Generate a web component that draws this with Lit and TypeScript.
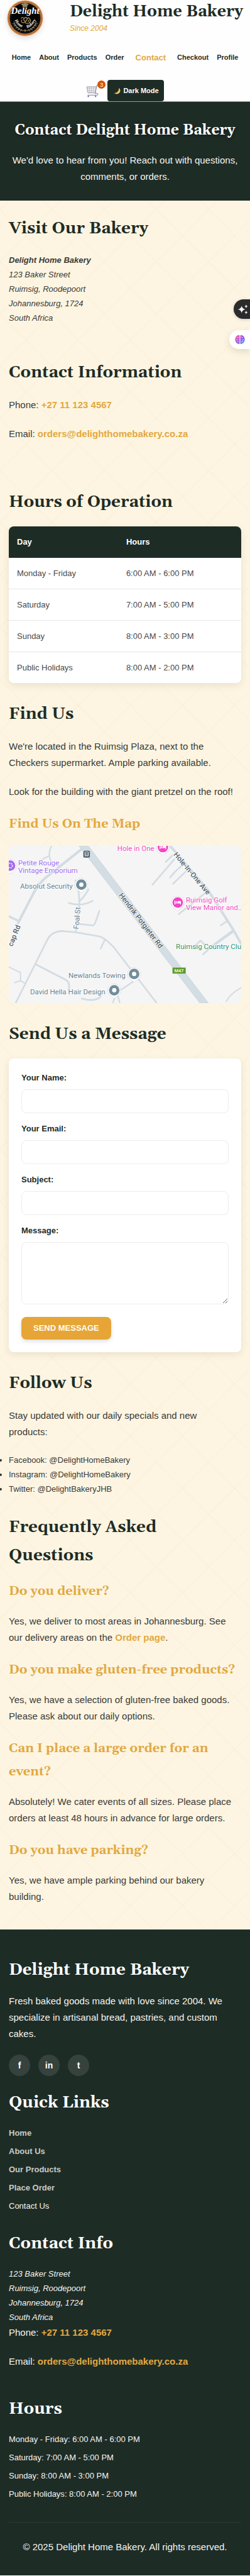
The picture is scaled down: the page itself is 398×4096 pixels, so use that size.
import { LitElement, html, css, svg } from "lit";
import { customElement, property } from "lit/decorators.js";

const HOURS = [
  ["Monday - Friday", "6:00 AM - 6:00 PM"],
  ["Saturday", "7:00 AM - 5:00 PM"],
  ["Sunday", "8:00 AM - 3:00 PM"],
  ["Public Holidays", "8:00 AM - 2:00 PM"],
];

const NAV = ["Home", "About", "Products", "Order", "Contact", "Checkout", "Profile"];
const QUICK = ["Home", "About Us", "Our Products", "Place Order"];

@customElement("bakery-logo")
export class BakeryLogo extends LitElement {
  static styles = css`
    :host { display: block; width: 58px; height: 58px; border-radius: 50%; box-shadow: 0 3px 8px rgba(0, 0, 0, 0.12); }
    svg { display: block; width: 100%; height: 100%; }
    .script { font: italic bold 52px "Liberation Serif", serif; fill: #fff; }
    .arc { font: italic bold 24px "Liberation Serif", serif; fill: #f4f0e8; }
  `;
  render() {
    return html`<svg viewBox="0 0 204 204" role="img" aria-label="Delight Home Bakery logo">
      <defs>
        <path id="arc-l" d="M44 112 Q58 150 98 158" />
        <path id="arc-r" d="M112 158 Q146 146 164 108" />
      </defs>
      <circle cx="102" cy="102" r="102" fill="#f3cfa4" />
      <circle cx="102" cy="102" r="98" fill="#b5713d" />
      <circle cx="102" cy="102" r="87" fill="#c98a55" />
      <circle cx="102" cy="102" r="86" fill="#050505" />
      <circle cx="102" cy="102" r="80" fill="none" stroke="#3a2c20" stroke-width="2" />
      <path d="M88 40 v-9 q-9 -2 -6 -9 q5 -6 10 -2 q3 -7 10 -6 q7 -1 10 6 q7 -3 9 3 q1 6 -7 8 v9 z" fill="#8f8667" />
      <text class="script" x="102" y="76" text-anchor="middle">Delight</text>
      <g fill="none" stroke="#b79b62" stroke-width="4" stroke-linecap="round">
        <path d="M80 102 q10 -10 16 2 q10 -14 18 0 q10 -10 14 4 q8 4 2 12" />
        <path d="M84 112 q-8 8 2 14 q8 4 16 -4 q2 12 14 8 q10 2 14 -10" />
        <path d="M92 108 l10 12 M114 106 l-8 14 M124 112 l-6 8" />
      </g>
      <text class="arc"><textPath href="#arc-l">Home</textPath></text>
      <text class="arc"><textPath href="#arc-r">Bakery</textPath></text>
      <g fill="none" stroke="#9c9379" stroke-width="4" stroke-linecap="round">
        <path d="M40 122 Q54 162 92 172" stroke-dasharray="5 5" />
        <path d="M34 132 l12 4 M40 144 l12 0 M50 156 l12 -3 M62 166 l10 -6 M76 172 l8 -7" />
        <path d="M164 122 Q150 162 112 172" stroke-dasharray="5 5" />
        <path d="M170 132 l-12 4 M164 144 l-12 0 M154 156 l-12 -3 M142 166 l-10 -6 M128 172 l-8 -7" />
      </g>
      <path d="M94 166 h16 l-8 14 z" fill="#a9763f" />
    </svg>`;
  }
}

@customElement("area-map")
export class AreaMap extends LitElement {
  static styles = css`
    :host { display: block; height: 250px; border-radius: 8px; overflow: hidden; background: #f5f5f5; }
    svg { display: block; width: 100%; height: 100%; }
    text { font-family: Roboto, "Liberation Sans", sans-serif; font-size: 40px; paint-order: stroke; stroke: #fff; stroke-width: 5px; stroke-linejoin: round; }
    .poi { fill: #6b808c; }
    .shop { fill: #a56bf0; }
    .stay { fill: #ef4fc4; }
    .park { fill: #2f9468; }
    .street { fill: #4e5d69; font-weight: 500; }
    .shield { fill: #f4f6c8; font-size: 26px; font-weight: 700; stroke: none; }
  `;
  private pin(x: number, y: number, color: string, kind: string) {
    return svg`<g transform="translate(${x} ${y})">
      <path d="M0 46 Q-8 38 -22 29 A36 36 0 1 1 22 29 Q8 38 0 46 Z" fill="#fff" stroke="#c9c9c9" stroke-width="2" />
      <circle r="29" fill=${color} />
      ${kind === "dot" ? svg`<circle r="12" fill="#fff" />` : ""}
      ${kind === "bed" ? svg`<path d="M-18 -11 h4 v12 h13 v-9 h14 q5 0 5 5 v14 h-4 v-6 h-28 v6 h-4 z" fill="#fff" /><circle cx="-8" cy="-4" r="4" fill="#fff" />` : ""}
      ${kind === "palette" ? svg`<circle r="13" fill="none" stroke="#fff" stroke-width="6" stroke-dasharray="6 5" />` : ""}
    </g>`;
  }
  render() {
    return html`<svg viewBox="46 45 1289 868" preserveAspectRatio="xMidYMid slice" role="img" aria-label="Map of Ruimsig">
      <rect x="40" y="40" width="1300" height="880" fill="#f5f5f5" />
      <g fill="none" stroke="#d3dce2" stroke-linecap="round" stroke-linejoin="round">
        <path stroke-width="14" d="M452 62 L250 222 Q205 262 175 325 L100 470" />
        <path stroke-width="12" d="M40 430 L100 458" />
        <path stroke-width="8" d="M284 45 Q262 90 280 126 M266 102 L236 118" />
        <path stroke-width="9" d="M416 235 Q440 290 438 375 L418 522 M488 285 Q475 315 438 352 M380 360 Q450 382 512 348" />
        <path stroke-width="9" d="M436 476 L512 484 Q522 482 526 470 L549 404" />
        <path stroke-width="9" d="M86 913 L262 562 Q282 520 340 515 L418 522 L550 545 Q580 554 628 604 L866 913" />
        <path stroke-width="9" d="M578 566 L556 612" />
        <path stroke-width="10" d="M195 698 L366 786 Q388 800 380 840" />
        <path stroke-width="7" d="M46 712 L113 745 V790 L80 800 M113 790 L135 802" />
        <path stroke-width="8" d="M735 795 L650 852 M650 870 L662 913 M636 880 L622 913" />
        <path stroke-width="10" d="M452 888 Q530 908 556 876" />
        <path stroke-width="14" d="M940 45 L1150 290 L1290 510 L1335 590" />
        <path stroke-width="9" d="M952 98 L916 134 M962 120 L842 260 M1004 155 Q960 190 940 220 M1025 188 L956 254" />
        <path stroke-width="9" d="M1140 300 L988 422 M1254 460 L1220 484 M1288 510 L1180 590 L1122 644 M1288 520 L1190 590 M1060 612 L1108 568 L1130 590" />
        <path stroke-width="7" d="M1335 826 Q1270 862 1250 904" />
      </g>
      <path d="M436 45 H488 L1152 913 H1104 Z" fill="#d3dde4" stroke="#c4ced6" stroke-width="2" />
      <rect x="459" y="70" width="39" height="41" rx="10" fill="#4c5d6b" stroke="#fff" stroke-width="2" />
      <path d="M469 79 h19 v20 h-19 z M469 90 h19 M472 99 v5 M485 99 v5" fill="none" stroke="#fff" stroke-width="3" />
      ${this.pin(55, 154, "#a56bf0", "palette")}
      ${this.pin(449, 259, "#728d9b", "dot")}
      ${this.pin(741, 752, "#728d9b", "dot")}
      ${this.pin(631, 842, "#728d9b", "dot")}
      ${this.pin(900, 52, "#f544c6", "bed")}
      ${this.pin(982, 358, "#f544c6", "bed")}
      <text class="shop" x="100" y="153">Petite Rouge</text>
      <text class="shop" x="100" y="194">Vintage Emporium</text>
      <text class="poi" x="111" y="281">Absolut Security</text>
      <text class="poi" x="378" y="773">Newlands Towing</text>
      <text class="poi" x="166" y="863">David Hella Hair Design</text>
      <text class="stay" x="648" y="72">Hole in One</text>
      <text class="stay" x="1027" y="359">Ruimsig Golf</text>
      <text class="stay" x="1027" y="400">View Manor and..</text>
      <text class="park" x="972" y="615">Ruimsig Country Clu</text>
      <text class="street" transform="translate(655 318) rotate(52.5)">Hendrik Potgieter Rd</text>
      <text class="street" transform="translate(957 94) rotate(50)">Hole-In-One Ave</text>
      <text class="poi" transform="translate(434 506) rotate(-85)">Foal St</text>
      <text class="street" transform="translate(68 602) rotate(-68)">cap Rd</text>
      <rect x="953" y="717" width="73" height="33" fill="#5b9a2c" />
      <text class="shield" x="989" y="743" text-anchor="middle">M47</text>
    </svg>`;
  }
}

@customElement("app-root")
export class AppRoot extends LitElement {
  @property({ type: Number }) cartCount = 3;

  static styles = css`
    :host {
      --green: #1e2c26;
      --gold: #e2a840;
      --serif: Gelasio, Georgia, "Liberation Serif", serif;
      display: block;
      position: relative;
      overflow: hidden;
      font: 13px/23px "Liberation Sans", Arial, sans-serif;
      color: #3a3a38;
      background: #fdf5e1;
    }
    *, *::before, *::after { box-sizing: border-box; }
    h1, h2, h3, p, ul, address { margin: 0; padding: 0; }
    h1, h2, h3 { font-family: var(--serif); font-weight: 700; }
    p { font-size: 15px; line-height: 26px; margin-bottom: 20px; }
    a { color: var(--gold); font-weight: 700; text-decoration: none; }

    .top { background: #fefefe; border-bottom: 1px solid #b39a5c; }
    .brand { display: flex; justify-content: space-between; align-items: flex-start; padding: 0 11px; }
    .name { font: 700 25px/38px var(--serif); color: var(--green); white-space: nowrap; }
    .since { font-size: 12px; line-height: 14px; font-style: italic; color: var(--gold); }
    .nav { display: flex; justify-content: center; align-items: center; gap: 13px; height: 23px; margin-top: 22px; font-size: 11px; }
    .nav a { color: var(--green); }
    .nav .current { color: var(--gold); font-size: 13px; margin: 0 5px; }
    .tools { display: flex; justify-content: center; align-items: flex-end; gap: 14px; margin-top: 24px; }
    .cart { position: relative; display: block; width: 20px; height: 26px; }
    .cart svg { display: block; width: 20px; height: 20px; }
    .badge { position: absolute; top: -7px; right: -11px; width: 13px; height: 13px; border-radius: 50%; background: #d35400; color: #fff; font-size: 9px; line-height: 14px; font-weight: 400; text-align: center; }
    .mode { display: flex; align-items: center; gap: 4px; height: 34px; padding: 0 8px 0 10px; border: 0; border-radius: 4px; background: var(--green); color: #fff; font: 700 11px/20px "Liberation Sans", Arial, sans-serif; }
    .mode svg { width: 11px; height: 11px; }

    .banner { background: var(--green); color: #fff; text-align: center; padding: 25px 14px; }
    .banner h1 { font-size: 23px; line-height: 41px; margin-bottom: 14px; text-shadow: 1px 2px 4px rgba(0, 0, 0, 0.4); }
    .banner p { margin: 0; color: #f6f4ee; }

    main {
      display: flex; flex-direction: column; gap: 27px;
      padding: 22px 14px 19px;
      background-image:
        linear-gradient(45deg, transparent 49%, rgba(120, 100, 60, 0.03) 50%, transparent 51%),
        linear-gradient(-45deg, transparent 49%, rgba(120, 100, 60, 0.03) 50%, transparent 51%);
      background-size: 83px 83px;
      background-position: 0 14px;
    }
    h2 { font-size: 26px; line-height: 45px; margin-bottom: 16px; }
    main h2 { color: var(--green); }
    h3 { font-size: 20px; line-height: 37px; margin-bottom: 16px; color: var(--gold); }
    .detail { padding-bottom: 26px; }

    table { width: 100%; border-collapse: separate; border-spacing: 0; border-radius: 8px; overflow: hidden; background: #fff; box-shadow: 0 4px 12px rgba(80, 60, 20, 0.1); color: #4a4a4a; }
    th, td { padding: 13px; line-height: 23px; text-align: left; border-bottom: 1px solid #e6e6e6; }
    th { background: var(--green); color: #fff; border-color: var(--green); }
    th:first-child { width: 47%; }
    tr:last-child td { border-bottom: 0; }

    form { display: flex; flex-direction: column; align-items: stretch; background: #fff; border-radius: 8px; padding: 20px; box-shadow: 0 4px 12px rgba(80, 60, 20, 0.1); }
    label { line-height: 22px; font-weight: 700; color: var(--green); margin-bottom: 7px; }
    input, textarea { display: block; width: 100%; height: 38px; margin: 0 0 14px; padding: 10px; border: 1px solid #ececec; border-radius: 8px; background: #fff; font: inherit; color: inherit; }
    textarea { height: 99px; margin-bottom: 20px; resize: vertical; }
    .send { align-self: flex-start; height: 36px; padding: 0 19px; border: 0; border-radius: 8px; background: #e6a536; color: #fffdf5; font: 700 13px/20px "Liberation Sans", Arial, sans-serif; box-shadow: 0 3px 6px rgba(0, 0, 0, 0.12); }

    footer { background: var(--green); color: #f4f4f0; padding: 42px 14px 32px; }
    footer h2 { margin-bottom: 14px; color: #fff; }
    footer section { display: flow-root; margin-bottom: 20px; }
    footer ul { list-style: none; }
    footer li { padding-bottom: 6px; }
    .quick a { color: #c6cbc8; }
    .social { display: flex; gap: 13px; }
    .social a { width: 34px; height: 34px; border-radius: 50%; background: #35423d; color: #fff; font-size: 14px; line-height: 34px; text-align: center; }
    .legal { border-top: 1px solid #2c3934; padding-top: 26px; margin-top: 27px; text-align: center; }
    .legal p { margin: 0; }
    footer .last { margin-bottom: 0; }

    .float { position: absolute; right: 0; display: flex; align-items: center; border: 0; padding: 0; }
    .spark { top: 476px; width: 26px; height: 31px; padding-left: 7px; border-radius: 16px 0 0 16px; background: #2b2b2b; box-shadow: 0 1px 5px rgba(0, 0, 0, 0.2); }
    .brain { top: 525px; width: 33px; height: 30px; padding-left: 9px; border-radius: 15px 0 0 15px; background: #fff; box-shadow: 0 4px 12px rgba(80, 60, 20, 0.15); }
    .float svg { flex: none; width: 16px; height: 16px; }
  `;

  private field(id: string, label: string, type: string) {
    return html`<label for=${id}>${label}</label><input id=${id} type=${type} />`;
  }

  private address() {
    return html`123 Baker Street<br />Ruimsig, Roodepoort<br />Johannesburg, 1724<br />South Africa`;
  }

  private contacts() {
    return html`<p>Phone: <a href="tel:+27111234567">+27 11 123 4567</a></p>
      <p>Email: <a href="mailto:orders@delighthomebakery.co.za">orders@delighthomebakery.co.za</a></p>`;
  }

  render() {
    return html`
      <header class="top">
        <div class="brand">
          <bakery-logo></bakery-logo>
          <div>
            <div class="name">Delight Home Bakery</div>
            <div class="since">Since 2004</div>
          </div>
        </div>
        <nav class="nav">
          ${NAV.map((n) => html`<a href="#" class=${n === "Contact" ? "current" : ""}>${n}</a>`)}
        </nav>
        <div class="tools">
          <a class="cart" href="#" aria-label="Cart">
            <svg viewBox="0 0 66 66">
              <path d="M4 10 H54 L48 42 H10 Z" fill="#f1f0f5" stroke="#8c8896" stroke-width="3" />
              <path d="M6 20 H52 M8 31 H50 M16 10 l3 32 M28 10 v32 M40 10 l-3 32" stroke="#a5a2ad" stroke-width="2" fill="none" />
              <path d="M63 3 H56 L48 46 Q62 40 62 50 Q60 55 50 54 H8" fill="none" stroke="#9b96a8" stroke-width="4" stroke-linejoin="round" />
              <circle cx="12" cy="60" r="4" fill="#6a82b4" /><circle cx="50" cy="60" r="4" fill="#6a82b4" />
            </svg>
            <span class="badge">${this.cartCount}</span>
          </a>
          <button class="mode" type="button">
            <svg viewBox="0 0 36 36"><path d="M27 2 Q40 16 30 28 Q18 40 1 29 Q16 31 23 20 Q28 12 27 2 Z" fill="#f6c461" /></svg>
            Dark Mode
          </button>
        </div>
      </header>

      <div class="banner">
        <h1>Contact Delight Home Bakery</h1>
        <p>We'd love to hear from you! Reach out with questions, comments, or orders.</p>
      </div>

      <main>
        <section class="detail">
          <h2>Visit Our Bakery</h2>
          <address><strong>Delight Home Bakery</strong><br />${this.address()}</address>
        </section>
        <section class="detail">
          <h2>Contact Information</h2>
          ${this.contacts()}
        </section>
        <section>
          <h2>Hours of Operation</h2>
          <table>
            <thead><tr><th>Day</th><th>Hours</th></tr></thead>
            <tbody>${HOURS.map(([d, h]) => html`<tr><td>${d}</td><td>${h}</td></tr>`)}</tbody>
          </table>
        </section>
        <section>
          <h2>Find Us</h2>
          <p>We're located in the Ruimsig Plaza, next to the Checkers supermarket. Ample parking available.</p>
          <p>Look for the building with the giant pretzel on the roof!</p>
          <h3>Find Us On The Map</h3>
          <area-map></area-map>
        </section>
        <section>
          <h2>Send Us a Message</h2>
          <form>
            ${this.field("name", "Your Name:", "text")}
            ${this.field("email", "Your Email:", "email")}
            ${this.field("subject", "Subject:", "text")}
            <label for="message">Message:</label>
            <textarea id="message"></textarea>
            <button class="send" type="button">SEND MESSAGE</button>
          </form>
        </section>
        <section>
          <h2>Follow Us</h2>
          <p>Stay updated with our daily specials and new<br />products:</p>
          <ul>
            <li>Facebook: @DelightHomeBakery</li>
            <li>Instagram: @DelightHomeBakery</li>
            <li>Twitter: @DelightBakeryJHB</li>
          </ul>
        </section>
        <section>
          <h2>Frequently Asked Questions</h2>
          <h3>Do you deliver?</h3>
          <p>Yes, we deliver to most areas in Johannesburg. See our delivery areas on the <a href="#">Order page</a>.</p>
          <h3>Do you make gluten-free products?</h3>
          <p>Yes, we have a selection of gluten-free baked goods. Please ask about our daily options.</p>
          <h3>Can I place a large order for an event?</h3>
          <p>Absolutely! We cater events of all sizes. Please place orders at least 48 hours in advance for large orders.</p>
          <h3>Do you have parking?</h3>
          <p>Yes, we have ample parking behind our bakery building.</p>
        </section>
      </main>

      <footer>
        <section>
          <h2>Delight Home Bakery</h2>
          <p>Fresh baked goods made with love since 2004. We specialize in artisanal bread, pastries, and custom cakes.</p>
          <div class="social"><a href="#">f</a><a href="#">in</a><a href="#">t</a></div>
        </section>
        <section>
          <h2>Quick Links</h2>
          <ul class="quick">
            ${QUICK.map((q) => html`<li><a href="#">${q}</a></li>`)}
            <li>Contact Us</li>
          </ul>
        </section>
        <section>
          <h2>Contact Info</h2>
          <address>${this.address()}</address>
          ${this.contacts()}
        </section>
        <section class="last">
          <h2>Hours</h2>
          <ul>${HOURS.map(([d, h]) => html`<li>${d}: ${h}</li>`)}</ul>
        </section>
        <div class="legal"><p>© 2025 Delight Home Bakery. All rights reserved.</p></div>
      </footer>

      <button class="float spark" type="button" aria-label="Assistant">
        <svg viewBox="0 0 56 56" fill="#fff">
          <path d="M20 8 Q23 25 40 28 Q23 31 20 48 Q17 31 0 28 Q17 25 20 8 Z" />
          <path d="M45 1 Q46 10 54 11 Q46 12 45 21 Q44 12 36 11 Q44 10 45 1 Z" />
          <path d="M45 35 Q46 44 54 45 Q46 46 45 55 Q44 46 36 45 Q44 44 45 35 Z" />
        </svg>
      </button>
      <button class="float brain" type="button" aria-label="Insights">
        <svg viewBox="0 0 56 56">
          <defs>
            <linearGradient id="g" x1="0" y1="0" x2="1" y2="1">
              <stop offset="0" stop-color="#f58a5a" /><stop offset="0.3" stop-color="#d24fd0" />
              <stop offset="0.6" stop-color="#8a5be8" /><stop offset="1" stop-color="#3aa8f5" />
            </linearGradient>
          </defs>
          <path d="M26 4 Q18 0 13 6 Q5 7 5 16 Q-1 22 2 29 Q0 37 6 41 Q8 50 16 50 Q21 55 26 51 Z M30 4 Q38 0 43 6 Q51 7 51 16 Q57 22 54 29 Q56 37 50 41 Q48 50 40 50 Q35 55 30 51 Z" fill="url(#g)" />
          <path d="M12 17 q6 4 9 -3 M7 29 h12 M12 41 q6 -6 10 0 M44 17 q-6 4 -7 -4 M49 29 h-10 M38 44 v-7 h6" fill="none" stroke="#fff" stroke-opacity="0.75" stroke-width="3" stroke-linecap="round" />
        </svg>
      </button>
    `;
  }
}
